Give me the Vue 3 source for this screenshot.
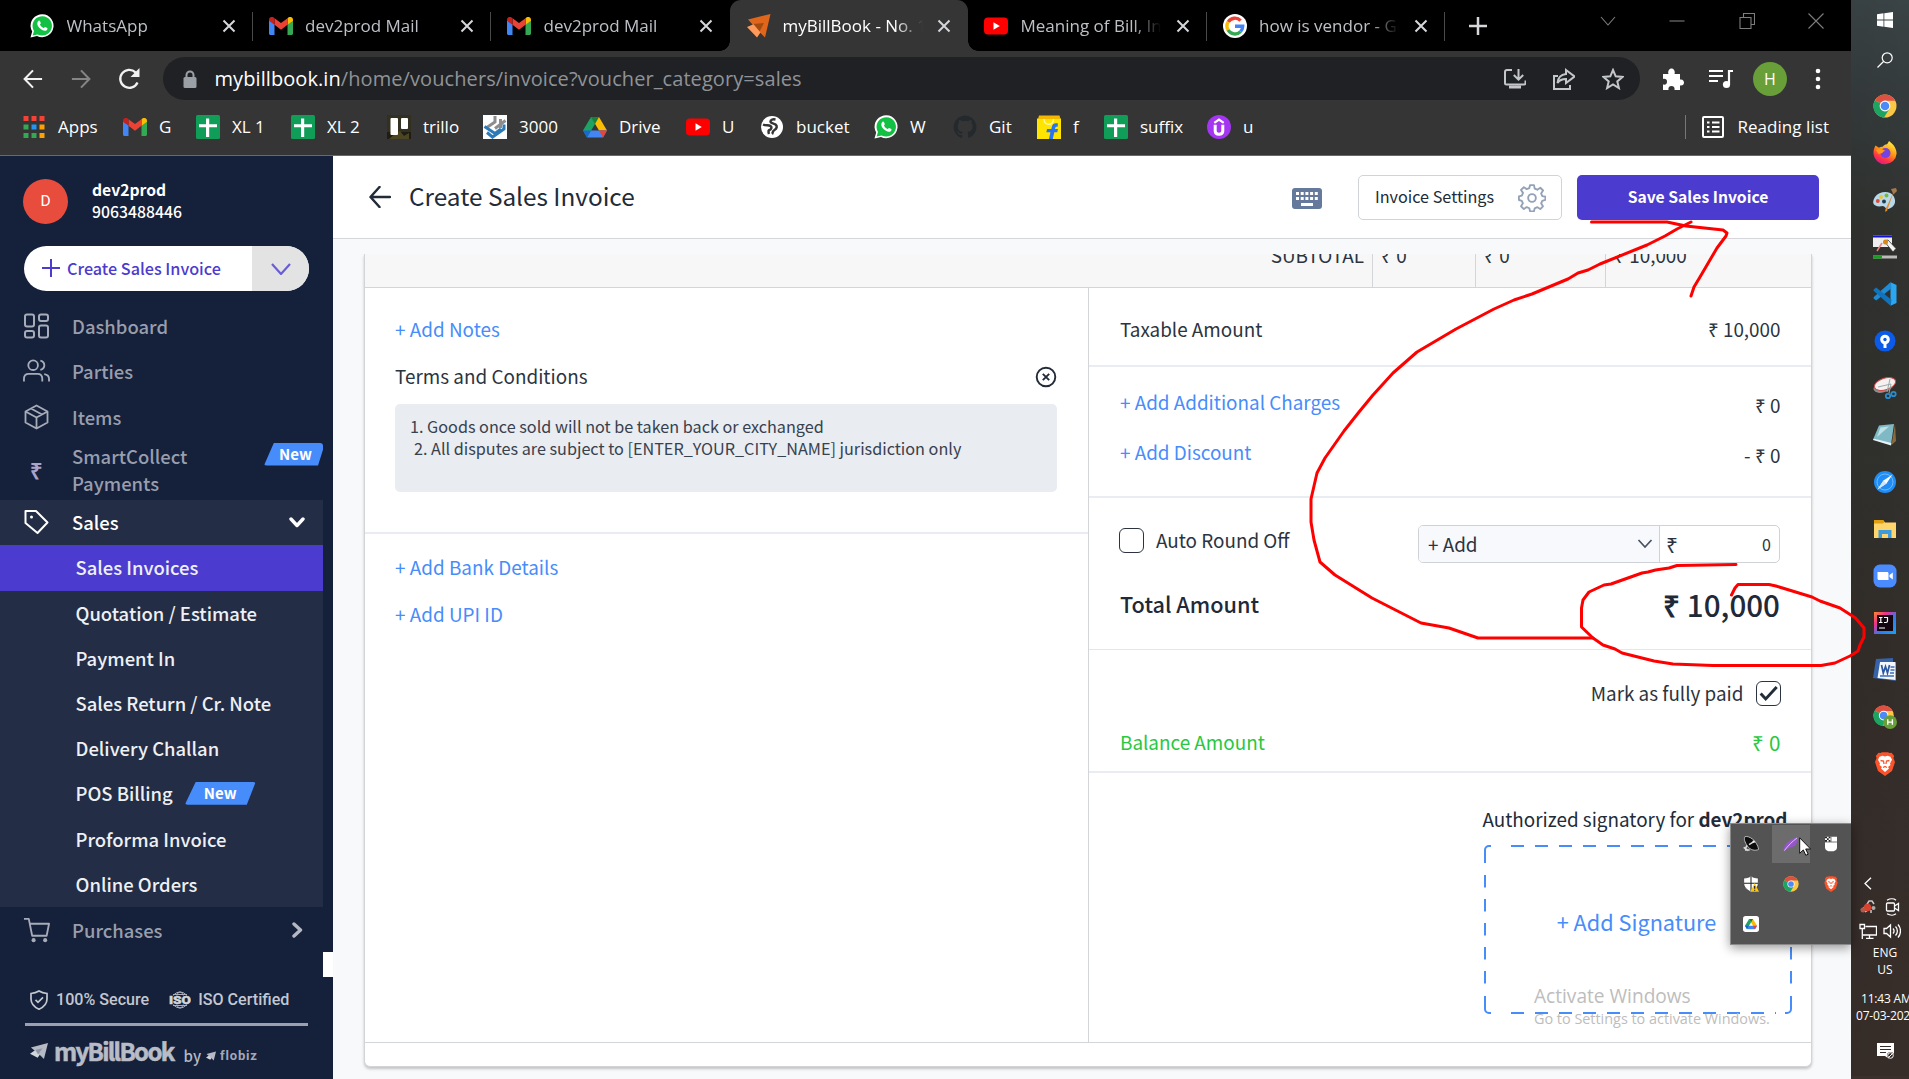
<script setup>
const tabs = [
  { icon: 'whatsapp', title: 'WhatsApp' },
  { icon: 'gmail', title: 'dev2prod Mail' },
  { icon: 'gmail', title: 'dev2prod Mail' },
  { icon: 'billbook', title: 'myBillBook - No. 1', active: true },
  { icon: 'youtube', title: 'Meaning of Bill, Inv' },
  { icon: 'google', title: 'how is vendor - Go' },
]
const bookmarks = [
  { icon: 'apps', label: 'Apps', w: 101 },
  { icon: 'gmail', label: 'G', w: 73 },
  { icon: 'sheet', label: 'XL 1', w: 95 },
  { icon: 'sheet', label: 'XL 2', w: 96 },
  { icon: 'trello', label: 'trillo', w: 96 },
  { icon: 'hub', label: '3000', w: 100 },
  { icon: 'drive', label: 'Drive', w: 103 },
  { icon: 'youtube', label: 'U', w: 74 },
  { icon: 'globe', label: 'bucket', w: 114 },
  { icon: 'whatsapp', label: 'W', w: 79 },
  { icon: 'github', label: 'Git', w: 84 },
  { icon: 'flipkart', label: 'f', w: 67 },
  { icon: 'sheet', label: 'suffix', w: 103 },
  { icon: 'udemy', label: 'u', w: 60 },
]
const nav = [
  { icon: 'dashboard', label: 'Dashboard' },
  { icon: 'parties', label: 'Parties' },
  { icon: 'items', label: 'Items' },
]
const subnav = [
  { label: 'Sales Invoices', active: true },
  { label: 'Quotation / Estimate' },
  { label: 'Payment In' },
  { label: 'Sales Return / Cr. Note' },
  { label: 'Delivery Challan' },
  { label: 'POS Billing', badge: true },
  { label: 'Proforma Invoice' },
  { label: 'Online Orders' },
]
const taskbar = ['chrome', 'firefox', 'paint', 'pointer', 'vscode', 'sourcetree', 'snip', 'notepad', 'safari', 'folder', 'zoom', 'intellij', 'word', 'chromeh', 'brave']
const tray = ['dish', 'feather', 'mouse', 'shield', 'chrome', 'brave', 'drivebox']
</script>

<template>
  <div class="screen">
    <svg class="defs" width="0" height="0" aria-hidden="true">
      <defs>
        <linearGradient id="ffg" x1="0.8" y1="0" x2="0.3" y2="1">
          <stop offset="0" stop-color="#fff44f" /><stop offset=".45" stop-color="#ff980e" /><stop offset=".75" stop-color="#ff3647" /><stop offset="1" stop-color="#e31587" />
        </linearGradient>
        <linearGradient id="ijg" x1="0" y1="0" x2="1" y2="1">
          <stop offset="0" stop-color="#fc8a2b" /><stop offset=".3" stop-color="#f2308b" /><stop offset=".6" stop-color="#2b7df0" /><stop offset="1" stop-color="#18a0f8" />
        </linearGradient>
        <symbol id="whatsapp" viewBox="0 0 24 24">
          <path d="M.5 23.5 2.2 17.6A11.5 11.5 0 1 1 7 22z" fill="#fff" />
          <path d="M2.6 21.4 4 17A9.7 9.7 0 1 1 7.6 20.4z" fill="#12c143" />
          <path d="M8.6 6.8c.5-.4 1-.3 1.3.3l.9 2c.1.5-.9 1.3-.8 1.7a8 8 0 0 0 3.5 3.3c.5.1 1.1-1.2 1.7-1.1l2.1 1c.5.3.1 1.800-.6 2.300-1.200.8-2.700.7-4.500-.2a12 12 0 0 1-4.300-4.200c-.9-1.800-.8-3.900.7-5.100z" fill="#fff" />
        </symbol>
        <symbol id="gmail" viewBox="0 0 24 18">
          <path d="M0 3v13.500c0 .8.700 1.500 1.600 1.500H5.500V7.200L0 3z" fill="#4285f4" />
          <path d="M24 3v13.500c0 .8-.7 1.500-1.600 1.500h-3.900V7.200z" fill="#34a853" />
          <path d="M18.500 7.800V1.200l1.200-.9C21.500-.9 24 .5 24 2.600v1.200z" fill="#fbbc04" />
          <path d="M5.500 7.800V1.200l6.500 4.900 6.500-4.900v6.600L12 12.700z" fill="#ea4335" />
          <path d="M0 2.600v1.200l5.500 4V1.200L4.300.3C2.500-.9 0 .5 0 2.600z" fill="#c5221f" />
        </symbol>
        <symbol id="billbook" viewBox="0 0 24 24">
          <path d="M1 5.500 23.500 0 18 23.500 10.500 16z" fill="#e0661c" /><path d="M6 10 17 9 12.500 17.500z" fill="#a34a10" />
          <path d="M0 13 6.500 10.200 13.500 18.500 10 23.500z" fill="#ff9a5c" />
        </symbol>
        <symbol id="youtube" viewBox="0 0 24 24"><rect x="0" y="3.500" width="24" height="17" rx="4" fill="#f00" /><path d="M9.500 8.300 15.800 12 9.500 15.700z" fill="#fff" /></symbol>
        <symbol id="google" viewBox="0 0 24 24">
          <circle cx="12" cy="12" r="12" fill="#fff" />
          <g fill="none" stroke-width="3.400"><path d="M5.200 8A7.800 7.800 0 0 1 17.600 6.600" stroke="#ea4335" /><path d="M5.200 16.200A7.800 7.800 0 0 1 5.200 7.900" stroke="#fbbc05" /><path d="M17.500 17.600A7.800 7.800 0 0 1 5.100 16" stroke="#34a853" /><path d="M12 12.200h7.700c0 2.500-.8 4-2.300 5.400" stroke="#4285f4" /></g>
        </symbol>
        <symbol id="apps" viewBox="0 0 24 24">
          <g fill="#f44336"><path d="M1.500 1h5v5h-5zM9.500 1h5v5h-5zM17.500 1h5v5h-5z" /></g><path d="M1.500 9.500h5v5h-5zM1.500 18h5v5h-5zM9.500 18h5v5h-5z" fill="#34a853" /><path d="M9.500 9.500h5v5h-5z" fill="#2196f3" /><path d="M17.500 9.500h5v5h-5zM17.500 18h5v5h-5z" fill="#ffa000" />
        </symbol>
        <symbol id="sheet" viewBox="0 0 24 24"><rect width="24" height="24" rx="1.500" fill="#0f9d58" /><path d="M10 3.500h3.200v5.800H21v2.900h-7.800V22H10v-9.800H3V9.300h7z" fill="#fff" /></symbol>
        <symbol id="trello" viewBox="0 0 24 24"><path d="M0 0h24v24H0z" fill="#33301f" /><path d="M0 17h24v7H0z" fill="#1f1d13" /><path d="M13 16l4 5 5-3v6H2l6-5z" fill="#6a6131" opacity=".6" /><rect x="3.500" y="3" width="7.500" height="17" rx="1" fill="#fff" /><rect x="14" y="3" width="7" height="11" rx="1" fill="#fff" /></symbol>
        <symbol id="hub" viewBox="0 0 24 24"><path d="M0 0h24v24H0z" fill="#fff" /><g fill="none" stroke-width="3"><path d="M12 1v6L3 13M22.500 5.500 12 13.500M17.500 4v9" stroke="#8d8d8d" /><path d="M1.500 11.500 12 18.500l6-4.500M4 17.500l5.500 4.500L21 14V9.500" stroke="#2c7bb8" /></g></symbol>
        <symbol id="drive" viewBox="0 0 24 22"><path d="M8 1h8l8 13.500h-8z" fill="#fbbc04" /><path d="M8 1 12 8 4 21.500 0 14.500z" fill="#1ea362" /><path d="M4 21.500 8 14.500h16L20 21.500z" fill="#4285f4" /><path d="M0 14.500h8L4 21.500z" fill="#1967d2" /><path d="M16 14.500h8L20 21.500z" fill="#ea4335" /><path d="M8 1h8l-4 7z" fill="#188038" /></symbol>
        <symbol id="globe" viewBox="0 0 24 24"><circle cx="12" cy="12" r="11" fill="#fff" /><path d="M3 9.500c3 1.500 5.500 0 7.500 1.500s.5 3.500-1 4-1 2.500-.5 4M15.500 4.500c-2.500-.5-5 0-5 2s3 1.500 5 3 1.500 4-1 5.500-1.500 3-2.500 4" fill="none" stroke="#353535" stroke-width="2.500" /></symbol>
        <symbol id="github" viewBox="0 0 24 24"><path d="M12 .5a11.500 11.500 0 0 0-3.600 22.400c.6.1.8-.3.8-.6v-2.200c-3.200.7-3.900-1.400-3.900-1.400-.5-1.300-1.300-1.700-1.300-1.700-1-.7.1-.7.1-.7 1.200.1 1.800 1.200 1.800 1.200 1 1.800 2.700 1.300 3.400 1 .1-.8.4-1.300.7-1.600-2.600-.3-5.200-1.300-5.200-5.700 0-1.300.4-2.300 1.200-3.100-.1-.3-.5-1.500.1-3.100 0 0 1-.3 3.200 1.200a11 11 0 0 1 5.800 0c2.200-1.500 3.200-1.200 3.200-1.200.6 1.600.2 2.800.1 3.100.7.800 1.200 1.800 1.200 3.100 0 4.400-2.700 5.400-5.300 5.700.4.400.8 1.100.8 2.100v3.200c0 .3.200.700.8.600A11.500 11.500 0 0 0 12 .5z" fill="#24292e" /></symbol>
        <symbol id="flipkart" viewBox="0 0 24 24"><path d="M0 3.500h24V24H0z" fill="#ffe500" /><path d="M2 .5h20.500l1 3.500H1z" fill="#f5b800" /><path d="M7 4c0 7 9.500 7 9.500 0" fill="none" stroke="#fff6a0" stroke-width="1.500" /><path d="M21 8.500c-4-.8-5.500.5-6.200 3.500l-.5 2H10l-.6 3.200h4L12 24h3.800l1.500-6.800h3l.7-3.200h-3l.3-1.300c.3-1 1-1.200 2.300-1z" fill="#2874f0" /></symbol>
        <symbol id="udemy" viewBox="0 0 24 24"><circle cx="12" cy="12" r="12" fill="#a435f0" /><path d="M7.300 7.800 12 4.500l4.700 3.300" fill="none" stroke="#fff" stroke-width="2.200" /><path d="M8.200 9.800V16c0 2 1.500 3.300 3.800 3.300s3.800-1.300 3.800-3.300V9.800" fill="none" stroke="#fff" stroke-width="3" /></symbol>

        <symbol id="dashboard" viewBox="0 0 26 26"><g fill="none" stroke="currentColor" stroke-width="2"><rect x="1.500" y="1.500" width="9" height="12" rx="2" /><rect x="15.500" y="1.500" width="9" height="6.500" rx="2" /><rect x="1.500" y="18" width="9" height="6.500" rx="2" /><rect x="15.500" y="12.500" width="9" height="12" rx="2" /></g></symbol>
        <symbol id="parties" viewBox="0 0 28 26"><g fill="none" stroke="currentColor" stroke-width="1.900"><circle cx="10.500" cy="7" r="5" /><path d="M1 24v-3c0-3 2-5 5-5h9c3 0 5 2 5 5v3M18 2.200c5.500 1.500 5.500 8 0 9.600M22 16.200c3.500.5 5 2.500 5 5V24" /></g></symbol>
        <symbol id="items" viewBox="0 0 26 26"><g fill="none" stroke="currentColor" stroke-width="1.800" stroke-linejoin="round"><path d="M13 1.500 24 7.500v11L13 24.500 2 18.500v-11zM2 7.500l11 6 11-6M13 13.500v11M7.500 4.500l11 6" /></g></symbol>
        <symbol id="tag" viewBox="0 0 26 26"><path d="M2 2h10.500L24 13.500 14 24 2 14z" fill="none" stroke="currentColor" stroke-width="2" stroke-linejoin="round" /><circle cx="8" cy="8" r="1.500" fill="currentColor" /></symbol>
        <symbol id="cart" viewBox="0 0 28 26"><g fill="none" stroke="currentColor" stroke-width="1.900" stroke-linejoin="round"><path d="M1 1.500h5L9.500 19h15L27 6.500H7" /></g><circle cx="11" cy="23.500" r="2.100" fill="currentColor" /><circle cx="23" cy="23.500" r="2.100" fill="currentColor" /></symbol>

        <symbol id="chrome" viewBox="0 0 24 24"><circle cx="12" cy="12" r="11.500" fill="#fbc745" /><path d="M12 12 2 6.200A11.500 11.500 0 0 1 22.200 6.700H12z" fill="#dd5144" /><path d="M12 12 1.900 6.300A11.500 11.500 0 0 0 11 23.500L16.600 14.600z" fill="#1da462" /><circle cx="12" cy="12" r="5.400" fill="#fff" /><circle cx="12" cy="12" r="4.300" fill="#4c8bf5" /></symbol>
        <symbol id="chromeh" viewBox="0 0 26 26"><use href="#chrome" x="0" y="0" width="23" height="23" /><circle cx="18.500" cy="18.500" r="7.500" fill="#689f38" /><path d="M16 15.500v6M21 15.500v6M16 18.500h5" stroke="#fff" stroke-width="1.500" /></symbol>
        <symbol id="firefox" viewBox="0 0 24 24"><path d="M2.500 4.500 6 6.800c1-.8 2-1 3.500-1 .8-1 2.200-2.300 4.500-2.500C15 2 15.500 1 16 0c4 3 7.600 7 7.600 12.500A11.600 11.600 0 0 1 .5 13C.4 9.500 1 7 2.500 4.500z" fill="url(#ffg)" /><circle cx="12.500" cy="12" r="5" fill="#7542e5" /><path d="M3 9c3-2 7-1 9.500 1-2 0-3 1-3 2l-4 1z" fill="#ff9a1f" /></symbol>
        <symbol id="paint" viewBox="0 0 24 24"><path d="M2 9C6 3 17 2 20.500 8s1 11-5 13c-3 .8-3-3-6-3-4 1-8.500 0-9.300-3C0 12.500 1 10.500 2 9z" fill="#b9d9ea" /><circle cx="8" cy="9" r="2" fill="#e8c83a" /><circle cx="13.500" cy="7.500" r="2" fill="#74b93c" /><circle cx="4.800" cy="13" r="1.900" fill="#d84a3a" /><circle cx="11" cy="13.500" r="2" fill="#1d3f56" /><path d="M21 3 14 23l-2 .8.500-2.500z" fill="#e08a2c" /><path d="m18 1 5-1 1 3-3.500 3.500z" fill="#a5794b" /></symbol>
        <symbol id="pointer" viewBox="0 0 24 24"><path d="M0 .5h19v11.500H0z" fill="#eee" /><path d="M0 .5h19v2H0z" fill="#1010d8" /><path d="m4 16 5-8" stroke="#f08080" stroke-width="1.500" /><path d="m11 6 4-1 8 8.500-3 3.500z" fill="#f4f4f4" stroke="#333" stroke-width=".8" /><circle cx="12.500" cy="7" r="2.500" fill="#d88a18" /><path d="M0 20.500h24v3H0z" fill="#bbb" /><path d="M0 20.500h9v3H0z" fill="#16a020" /></symbol>
        <symbol id="vscode" viewBox="0 0 24 24"><path d="M17.500.3 23.500 3v18l-6 2.700z" fill="#2aa7f0" /><path d="m17.500.3 1 6L3.200 18.500.6 16.500v-1.200z" fill="#1f8bd4" /><path d="m17.500 23.700 1-6L3.200 5.500.6 7.500v1.200z" fill="#0f74bd" /></symbol>
        <symbol id="sourcetree" viewBox="0 0 24 24"><circle cx="12" cy="12" r="10.500" fill="#0b5be8" /><circle cx="12" cy="10.500" r="4.800" fill="#fff" /><circle cx="12" cy="10.500" r="1.700" fill="#0b5be8" /><path d="M10.500 14h3v5h-3z" fill="#fff" /></symbol>
        <symbol id="snip" viewBox="0 0 24 24"><ellipse cx="11" cy="10" rx="11" ry="6" transform="rotate(-22 11 10)" fill="#8e8e8e" /><ellipse cx="12" cy="8" rx="11" ry="5.800" transform="rotate(-18 12 8)" fill="#f4f1f0" stroke="#d04848" stroke-width="1" /><path d="m5 11 13-3-2 9M17 3l-3 13" stroke="#9aa" fill="none" /><g fill="none" stroke="#2a8bd0" stroke-width="1.800"><circle cx="15" cy="20" r="2.200" /><circle cx="20.500" cy="18" r="2.200" /></g></symbol>
        <symbol id="notepad" viewBox="0 0 24 24"><path d="M22 1l1 17-4.500 4z" fill="#8a6a3a" /><path d="M6 2.500 21 1l-3 21L.5 15.500z" fill="#7fb9c6" /><path d="M.5 15.500 18.300 20 18 22.500 0 17z" fill="#e6f2f4" /><path d="M7.500 4.500 16 3.500 4 14z" fill="#bfe0e5" /></symbol>
        <symbol id="safari" viewBox="0 0 24 24"><circle cx="12" cy="12" r="11" fill="#1f8df5" /><circle cx="12" cy="12" r="8" fill="none" stroke="#6fb8fa" stroke-width="1" /><path d="M19.500 4.500 13.500 13.500 4.500 19.500 10.500 10.500z" fill="#fff" /><path d="M10.500 10.500 13.500 13.500 4.500 19.500z" fill="#cfe6fb" /></symbol>
        <symbol id="folder" viewBox="0 0 24 24"><path d="M1 3h9l2 2.500h11V21H1z" fill="#ffd66b" /><path d="M1 3h9l1.500 2L10 6.500H1z" fill="#e0a012" /><path d="M5.500 13h13v8H15v-4H9v4H5.500z" fill="#3f9bdc" /></symbol>
        <symbol id="zoom" viewBox="0 0 24 24"><rect x=".5" y=".5" width="23" height="23" rx="6.500" fill="#4a8cff" /><path d="M4.500 8h9.500c1 0 1.500.6 1.500 1.500V16H6c-1 0-1.500-.6-1.500-1.500zM16.500 11l3.300-2.500v7L16.500 13z" fill="#fff" /></symbol>
        <symbol id="intellij" viewBox="0 0 24 24"><path d="M1 1h22v22H1z" fill="url(#ijg)" /><path d="M4 4h16v16H4z" fill="#120510" /><path d="M6 6.500h3.500M7.800 6.500v5M6 11.500h3.500M11 6.500h3.500v3.500c0 1-.6 1.500-1.500 1.500h-2M6 17h6" stroke="#fff" stroke-width="1.200" fill="none" /></symbol>
        <symbol id="word" viewBox="0 0 24 24"><path d="M3 1 20 0v4l3 1.500V23L0 20z" fill="#3562a8" /><path d="M7 4h15.500v18L4.500 20z" fill="#f3f6fc" /><path d="m8.500 7 1.800 8 2.200-6.500L14.500 15l2-8" fill="none" stroke="#2b57a0" stroke-width="1.700" /><path d="M17.500 9h4M17.500 12h4M7 18h14M17 15h4" stroke="#3d6cb8" stroke-width="1.400" /></symbol>
        <symbol id="brave" viewBox="0 0 24 24"><path d="m7.500 1 1.500-.8h6l1.500.8 2-.2 2.700 3.300-.8 2L22 10l-3 9-7 5-7-5-3-9 1.600-3.900-.8-2L5.500.8z" fill="#fb542b" /><path d="m12 4.500 2.500-.8 3 1 1.500 3-2 3.800.5 1.500-2.500 2 1 1.500-4 3.500-4-3.500 1-1.500-2.500-2 .5-1.500-2-3.800 1.500-3 3-1z" fill="#fff" /><path d="M7.500 8.500 10.500 9l.5 3M16.500 8.500 13.500 9l-.5 3M10 15.500l2-1 2 1" stroke="#fb542b" stroke-width="1.300" fill="none" /></symbol>
        <symbol id="dish" viewBox="0 0 24 24"><path d="M3 1C9-1 21 7 23.500 20c-5 3-13 1-17-5S1 4 3 1z" fill="#0c0c0c" stroke="#ccc" stroke-width="1.300" /><path d="m9 13 8-5M1 17l7 5M3 21h7M6 14l-3 6" stroke="#ddd" stroke-width="2.300" /><circle cx="16" cy="8.500" r="1.800" fill="#eee" /></symbol>
        <symbol id="feather" viewBox="0 0 24 24"><path d="M1 23C0 14 8 5 23 1c-1 7-2 12-8 15-4 2-9 2-11 5z" fill="#9456c8" /><path d="M2 22C8 14 13 9 21 3" stroke="#dcc3f0" stroke-width="1.500" fill="none" /></symbol>
        <symbol id="mouse" viewBox="0 0 24 24"><path d="M3 1h18v15c0 5-3 7-9 7s-9-2-9-7z" fill="#fff" /><path d="M3 9h18M12 1v8" stroke="#555" stroke-width="1.200" /><path d="M3 1h3v2.500H3zM8.500 1H11v2.500H8.500zM6 3.500h2.500V6H6zM3 6h3v2.500H3zM8.500 6H11v2.500H8.500z" fill="#222" /></symbol>
        <symbol id="shield" viewBox="0 0 24 24"><path d="M12 0c3 2 7 3 11 3v7c0 7-5 11-11 14C6 21 1 17 1 10V3c4 0 8-1 11-3z" fill="#fff" stroke="#222" stroke-width="1" /><path d="M12 1v22M1.500 11h21" stroke="#222" stroke-width="1.600" /><path d="m17.500 10.500 6.500 13H11z" fill="#fdc60b" /><path d="M17.500 15v4M17.500 20.500v1.500" stroke="#222" stroke-width="1.800" /></symbol>
        <symbol id="drivebox" viewBox="0 0 24 24"><rect width="24" height="24" rx="4" fill="#fff" /><use href="#drive" x="3" y="3.500" width="18" height="17" /></symbol>
      </defs>
    </svg>

    <div class="browser">
      <div class="tabbar">
        <div v-for="(t, i) in tabs" :key="i" class="tab" :class="{ active: t.active, nosep: i === 2 || t.active }">
          <svg class="fav" :class="{ mail: t.icon === 'gmail' }"><use :href="'#' + t.icon" /></svg>
          <span class="tab-title">{{ t.title }}</span>
          <svg class="x" viewBox="0 0 14 14"><path d="M1.500 1.500l11 11M12.500 1.500l-11 11" /></svg>
        </div>
        <svg class="plus" viewBox="0 0 18 18"><path d="M9 0v18M0 9h18" /></svg>
        <div class="winctl">
          <svg viewBox="0 0 16 16"><path d="M1 4l7 8 7-8" /></svg>
          <svg viewBox="0 0 16 16"><path d="M.5 8h15" /></svg>
          <svg viewBox="0 0 16 16"><path d="M1 4.500h11v11H1zM4.500 4.500v-4h11v11H12" /></svg>
          <svg viewBox="0 0 16 16"><path d="M.5.500l15 15M15.500.500l-15 15" /></svg>
        </div>
      </div>

      <div class="toolbar">
        <svg class="nav-ic" viewBox="0 0 22 22"><path d="M21 11H2M11 1.500 1.800 11 11 20.500" /></svg>
        <svg class="nav-ic dim" viewBox="0 0 22 22"><path d="M1 11h19M11 1.500 20.200 11 11 20.500" /></svg>
        <svg class="nav-ic reload" viewBox="0 0 22 22"><path d="M19 14.500A9 9 0 1 1 17 4.300l2 2" /><path d="M21 0v9h-9z" class="fill" /></svg>
        <div class="omnibox">
          <svg class="lock" viewBox="0 0 14 18"><path d="M3.500 8V5a3.500 3.500 0 0 1 7 0v3" fill="none" stroke="#9aa0a6" stroke-width="2" /><rect x=".5" y="7" width="13" height="11" rx="1.500" fill="#9aa0a6" /></svg>
          <span class="url"><b>mybillbook.in</b>/home/vouchers/invoice?voucher_category=sales</span>
          <svg class="oi" viewBox="0 0 22 22"><path d="M8 2H3a2 2 0 0 0-2 2v11a1.500 1.500 0 0 0 1.500 1.500H20a1.500 1.500 0 0 0 1.500-1.500v-2.500M14.500 1v10M9.800 7l4.700 4.700L19.200 7" /><path d="M5 17.500h12v3H5z" class="fill" /></svg>
          <svg class="oi" viewBox="0 0 22 22"><path d="M5 8H1v13h16v-4" /><path d="M13 2l8.500 6.500L13 15v-4c-4 0-6.500 1-8.500 4C5 9.500 8 6.500 13 6z" /></svg>
          <svg class="oi" viewBox="0 0 22 22"><path d="m11 2 2.700 6.300 6.800.6-5.200 4.500 1.600 6.700-5.900-3.600-5.900 3.600 1.600-6.700L1.500 8.900l6.800-.6z" /></svg>
        </div>
        <svg class="ti" viewBox="0 0 22 22"><path d="M1 6h5.500c-1-3 .8-5.500 3-5.500s4 2.500 3 5.500H18v5.500c2.500-.5 4 1 4 3s-1.500 3.500-4 3V22h-5.500c.5-2.500-.8-4-3-4s-3.500 1.500-3 4H1v-5.500c2.500.5 4-.5 4-2.800S3.500 10.500 1 11z" fill="#fff" /></svg>
        <svg class="ti music" viewBox="0 0 24 20"><path d="M0 2h14M0 7h14M0 12h9M24 2h-4v13" fill="none" stroke="#fff" stroke-width="2.200" /><circle cx="17.500" cy="15.500" r="3.600" fill="#fff" /></svg>
        <span class="avatar">H</span>
        <svg class="dots" viewBox="0 0 6 22"><circle cx="3" cy="3" r="2.300" /><circle cx="3" cy="11" r="2.300" /><circle cx="3" cy="19" r="2.300" /></svg>
      </div>

      <div class="bookmarks">
        <div v-for="(b, i) in bookmarks" :key="i" class="bm" :style="{ width: b.w + 'px' }">
          <svg :class="{ mail: b.icon === 'gmail' }"><use :href="'#' + b.icon" /></svg><span>{{ b.label }}</span>
        </div>
        <div class="reading">
          <svg viewBox="0 0 22 22"><rect x="1" y="1" width="20" height="20" rx="1" fill="none" stroke="#fff" stroke-width="2" /><path d="M5 6.500h2.500M5 11h2.500M5 15.500h2.500M10 6.500h7.500M10 11h7.500M10 15.500h7.500" stroke="#fff" stroke-width="2" /></svg>
          <span>Reading list</span>
        </div>
      </div>

      <div class="page">
        <aside class="sidebar">
          <div class="profile">
            <span class="pic">D</span>
            <div><div class="pname">dev2prod</div><div class="pnum">9063488446</div></div>
          </div>
          <div class="create">
            <div class="create-main"><svg viewBox="0 0 18 18"><path d="M9 0v18M0 9h18" /></svg>Create Sales Invoice</div>
            <div class="create-more"><svg viewBox="0 0 20 12"><path d="M1 1l9 10 9-10" /></svg></div>
          </div>
          <nav>
            <div v-for="n in nav" :key="n.label" class="row"><svg class="ni"><use :href="'#' + n.icon" /></svg>{{ n.label }}</div>
            <div class="row smart"><span class="rupee">₹</span><span>SmartCollect<br>Payments</span><span class="new cut">New</span></div>
            <div class="row sales"><svg class="ni"><use href="#tag" /></svg>Sales<svg class="chev" viewBox="0 0 16 11"><path d="M2 2l6 6.500L14 2" /></svg></div>
            <div class="sub">
              <div v-for="s in subnav" :key="s.label" class="subrow" :class="{ on: s.active }">{{ s.label }}<span v-if="s.badge" class="new">New</span></div>
            </div>
            <div class="row"><svg class="ni"><use href="#cart" /></svg>Purchases<svg class="chev closed" viewBox="0 0 11 16"><path d="M2 2l6.500 6L2 14" /></svg></div>
          </nav>
          <div class="trust">
            <svg class="sh" viewBox="0 0 18 20"><path d="M9 1c2.500 1.500 5 2.200 8 2.500V9c0 5-3 8-8 10.200C4 17 1 14 1 9V3.500C4 3.200 6.500 2.500 9 1zM5.500 9.800l2.500 2.500 5-5" /></svg>
            <span>100% Secure</span>
            <svg class="iso" viewBox="0 0 22 18"><g fill="none" stroke="#a9aebb" stroke-width="1"><circle cx="11" cy="9" r="8" /><ellipse cx="11" cy="9" rx="4" ry="8" /><path d="M4 3.500h14M4 14.500h14" /></g><rect y="4.500" width="22" height="9" fill="#15203a" /><text x="0" y="12.800" textLength="22" lengthAdjust="spacingAndGlyphs">ISO</text></svg>
            <span>ISO Certified</span>
          </div>
          <div class="brand">
            <svg class="plane" viewBox="0 0 20 18"><path d="M1 5 20 0l-4.500 18-5-5z" fill="#b5bac5" /><path d="M0 12 6 8l5 5-2.500 3.500z" fill="#d2d5dc" /><path d="M6 8 14 6l-5 7z" fill="#8e95a5" /></svg>
            <span class="mbb">myBillBook</span><span class="by">by</span>
            <svg class="plane sm" viewBox="0 0 20 18"><path d="M1 5 20 0l-4.500 18-5-5z" fill="#b5bac5" /><path d="M0 12 6 8l5 5-2.500 3.500z" fill="#d2d5dc" /></svg>
            <span class="flo">flobiz</span>
          </div>
          <div class="corner"></div>
        </aside>

        <main>
          <header>
            <svg class="back" viewBox="0 0 22 22"><path d="M21 11H2M10.500 1 1.500 11l9 10" /></svg>
            <h1>Create Sales Invoice</h1>
            <svg class="kbd" viewBox="0 0 30 21"><rect width="30" height="21" rx="3" fill="#64799b" /><path d="M4 5.500h22M4 10.500h22" stroke="#fff" stroke-width="3" stroke-dasharray="3 1.700" /><path d="M9 16.500h12" stroke="#fff" stroke-width="3" /></svg>
            <div class="settings">Invoice Settings
              <svg viewBox="0 0 24 24"><circle cx="12" cy="12" r="3.300" /><path d="M10.300 1h3.400l.6 2.900 2.300 1 2.500-1.700 2.400 2.400-1.700 2.500 1 2.300 2.700.5v2.700l-2.700.8-1 2.200 1.600 2.500-2.300 2.400-2.500-1.600-2.300 1-.7 2.600h-3.200l-.7-2.700-2.200-1-2.500 1.700-2.400-2.400 1.600-2.500-.9-2.200L.8 13.700v-3.100l2.500-.6 1-2.400-1.700-2.500L5 2.800l2.500 1.600 2.200-.9z" /></svg>
            </div>
            <button class="save">Save Sales Invoice</button>
          </header>

          <section class="card">
            <div class="subtotal"><span class="lab"><i>SUBTOTAL</i></span><span class="c1"><i>₹ 0</i></span><span class="c2"><i>₹ 0</i></span><span class="c3"><i>₹ 10,000</i></span></div>
            <div class="cols">
              <div class="left">
                <div class="notes">
                  <a>+ Add Notes</a>
                  <div class="terms-h">Terms and Conditions<svg viewBox="0 0 22 22"><circle cx="11" cy="11" r="9.300" /><path d="M7.800 7.800l6.400 6.400M14.200 7.800l-6.400 6.400" /></svg></div>
                  <div class="terms"><div>1. Goods once sold will not be taken back or exchanged</div><div class="t2">2. All disputes are subject to [ENTER_YOUR_CITY_NAME] jurisdiction only</div></div>
                </div>
                <div class="bank"><a>+ Add Bank Details</a><a>+ Add UPI ID</a></div>
              </div>
              <div class="right">
                <div class="taxable line"><span>Taxable Amount</span><span>₹ 10,000</span></div>
                <div class="charges">
                  <div class="line"><a>+ Add Additional Charges</a><span class="low">₹ 0</span></div>
                  <div class="line"><a>+ Add Discount</a><span class="low">- ₹ 0</span></div>
                </div>
                <div class="totals">
                  <div class="line round"><span class="chk"></span><span class="auto">Auto Round Off</span>
                    <div class="combo"><div class="sel">+ Add<svg viewBox="0 0 16 10"><path d="M1.500 1l6.500 7 6.500-7" /></svg></div><div class="amt"><span class="cur">₹</span><span class="z">0</span></div></div>
                  </div>
                  <div class="line total"><span>Total Amount</span><span class="big"><b>₹</b> 10,000</span></div>
                </div>
                <div class="balance">
                  <div class="line paid"><span>Mark as fully paid</span><span class="chk"><svg viewBox="0 0 24 24"><path d="M4 12.500l5.500 6L21.500 5.500" /></svg></span></div>
                  <div class="line green"><span>Balance Amount</span><span class="due">₹ 0</span></div>
                </div>
                <div class="sign">
                  <div class="auth">Authorized signatory for <b>dev2prod</b></div>
                  <div class="box">
                    <svg class="dash" viewBox="0 0 308 169">
                      <path d="M1 18V5a4 4 0 0 1 4-4h2M301 1h2a4 4 0 0 1 4 4v13M307 151v13a4 4 0 0 1-4 4h-2M7 168H5a4 4 0 0 1-4-4v-13" />
                      <path d="M27 1H292M27 168H292" stroke-dasharray="13 11" />
                      <path d="M1 30V148M307 30V148" stroke-dasharray="12.500 11.500" />
                    </svg>+ Add Signature
                  </div>
                </div>
              </div>
            </div>
            <div class="foot"></div>
          </section>
        </main>
      </div>
    </div>

    <div class="taskbar">
      <svg class="win" viewBox="0 0 16 16"><path d="M0 2.300 6.500 1.300v6.300H0zM7.300 1.200 16 0v7.600H7.300zM0 8.400h6.500v6.300L0 13.700zM7.300 8.400H16V16l-8.700-1.200z" fill="#fff" /></svg>
      <svg class="mag" viewBox="0 0 16 16"><circle cx="10.200" cy="5.800" r="5" /><path d="M6.500 9.500.500 15.500" /></svg>
      <div class="apps"><svg v-for="t in taskbar" :key="t"><use :href="'#' + t" /></svg></div>
      <svg class="up" viewBox="0 0 8 13"><path d="M7 .700 1 6.500l6 5.800" /></svg>
      <div class="sys">
        <svg viewBox="0 0 18 18"><path d="M2 12l5-4 3-5h3l2 3M6 14l3-2M12 12v3" stroke="#c9c9c9" stroke-width="1.500" fill="none" /><circle cx="8.500" cy="9.500" r="3.800" fill="#d8432f" /><circle cx="4" cy="12" r="2.500" fill="#b55a48" /><circle cx="14.500" cy="10" r="2" fill="#aaa" /></svg>
        <svg viewBox="0 0 18 18"><g fill="none" stroke="#fff" stroke-width="1.300"><rect x="3.500" y="5" width="8" height="8" rx="1" /><path d="M11.500 8l4-2.500v7l-4-2.500M4 2.200c3-1.700 7-1.700 9 0M4 15.800c3 1.700 7 1.700 9 0" /></g></svg>
        <svg viewBox="0 0 18 18"><g fill="none" stroke="#fff" stroke-width="1.300"><path d="M6.500 4.500h11v8.500H4M10.500 13v3M7 16.300h7.500M1 2.500h4.500v4H1zM3.300 6.500V17" /></g></svg>
        <svg viewBox="0 0 18 18"><g fill="none" stroke="#fff" stroke-width="1.300"><path d="M1 6.500h2.500L7.500 3v12l-4-3.500H1zM10 6.500c1.300 1.500 1.300 3.500 0 5M12.500 4.500c2.500 2.500 2.500 6.500 0 9M15 2.500c3.300 3.500 3.300 9.500 0 13" /></g></svg>
      </div>
      <div class="lang">ENG<br>US</div>
      <div class="clock"><span>11:43 AM</span><span>07-03-2022</span></div>
      <svg class="note" viewBox="0 0 17 17"><path d="M0 0h17v13h-5v3l-4-3H0z" fill="#fff" /><path d="M3 3.500h11M3 6.500h11M3 9.500h6" stroke="#362c28" stroke-width="1.200" /><circle cx="13.500" cy="12.500" r="3.500" fill="#362c28" /><circle cx="13.500" cy="12.500" r="2.800" fill="none" stroke="#fff" stroke-width="1" /><path d="M11.500 14.500l4-4" stroke="#fff" /></svg>
    </div>

    <div class="watermark"><div class="w1">Activate Windows</div><div class="w2">Go to Settings to activate Windows.</div></div>

    <svg class="ink" viewBox="0 0 1909 1079">
      <path d="M1593 638H1478L1449 628 1421 623 1372 598 1335 575 1320 562 1314 540 1311 522V499L1317 473 1325 458 1344 431 1359 412 1373 395 1393 373 1417 352 1456 329 1494 309 1514 300 1532 294 1568 279 1578 273 1588 270 1600 264 1647 245 1665 236 1677 229 1691 222" />
      <path d="M1591.500 222H1667L1686 226 1723 230 1727 233 1726 236 1717 248 1700 277 1694 287 1691 296" />
      <path d="M1736 564.500 1677 565.500 1669 568 1655.500 570 1648 572 1642 573 1611 584 1604 585 1589 592 1583 600 1581.500 608V627L1593 638 1603 645 1615 649 1622 653 1654 661 1673 664 1713 665.500H1821L1835 663 1850 656 1858 651 1860 645 1864 637V628L1855.500 618 1840 608 1820 601 1812 597 1776 586 1769 584.500H1738L1735 588 1731.500 595" />
    </svg>

    <div class="tray">
      <span v-for="t in tray" :key="t" class="cell" :class="{ hover: t === 'feather' }"><svg><use :href="'#' + t" /></svg></span>
      <svg class="cursor" viewBox="0 0 12 19"><path d="M.7.800v15.500l3.600-3.400 2.500 5.400 2.400-1.100-2.500-5.200h4.900z" fill="#fff" stroke="#111" stroke-width="1" /></svg>
    </div>
  </div>
</template>

<style>
body { margin: 0; overflow: hidden; background: #f8f9fb; }
</style>
<style scoped>
* { box-sizing: border-box; }
.screen { position: relative; display: flex; width: 1909px; height: 1079px; overflow: hidden; font-family: "Noto Sans CJK SC", sans-serif; color: #2b3440; white-space: nowrap; }
.defs { position: absolute; }
svg { flex: none; display: block; }
i { font-style: normal; }
.browser { width: 1851px; display: flex; flex-direction: column; flex: none; font-family: "Open Sans", "Noto Sans", sans-serif; }

.tabbar { height: 51px; background: #000; display: flex; align-items: center; padding-left: 14px; position: relative; }
.tab { width: 238.500px; height: 51px; display: flex; align-items: center; padding: 0 17px 0 16px; position: relative; color: #bdc1c6; font-size: 17px; }
.tab::after { content: ""; position: absolute; right: 0; top: 12px; width: 1px; height: 29px; background: #4a4a4a; }
.tab.nosep::after { display: none; }
.tab.active { background: #353535; border-radius: 11px 11px 0 0; color: #fff; padding-left: 17px; }
.tab.active::before { content: ""; position: absolute; left: -10px; right: -10px; bottom: 0; height: 10px; background: radial-gradient(circle at 0 0, transparent 9.500px, #353535 10px) 0 0 / 10px 10px no-repeat, radial-gradient(circle at 100% 0, transparent 9.500px, #353535 10px) 100% 0 / 10px 10px no-repeat; }
.fav { width: 24px; height: 24px; }
.fav.mail { height: 18px; }
.tab-title { flex: 1; margin: 0 8px 0 12.500px; overflow: hidden; line-height: 26px; -webkit-mask-image: linear-gradient(90deg, #000 112px, transparent 140px); mask-image: linear-gradient(90deg, #000 112px, transparent 140px); }
.active .tab-title { margin-left: 12px; }
.x { width: 14px; height: 14px; stroke: #d5d7da; stroke-width: 2; fill: none; }
.plus { width: 18px; height: 18px; margin-left: 24px; stroke: #d5d7da; stroke-width: 2.500; }
.winctl { margin-left: auto; display: flex; gap: 53.500px; padding-right: 27px; margin-top: -9px; }
.winctl svg { width: 16px; height: 16px; fill: none; stroke: #7d7d7d; stroke-width: 1.100; }

.toolbar { height: 55px; background: #353535; display: flex; align-items: center; padding-left: 22px; }
.nav-ic { width: 22px; height: 20px; margin-right: 26px; fill: none; stroke: #f1f1f1; stroke-width: 2.300; }
.nav-ic.dim { stroke: #858585; }
.nav-ic.reload { margin-right: 22px; width: 23px; height: 22px; }
.nav-ic .fill { fill: #f1f1f1; stroke: none; }
.omnibox { width: 1477px; height: 43px; border-radius: 22px; background: #202124; display: flex; align-items: center; padding: 0 16px 0 20px; }
.lock { width: 14px; height: 18px; margin-right: 17.500px; }
.url { flex: 1; font-size: 20px; color: #8f9398; line-height: 30px; font-family: "Open Sans", "Noto Sans", sans-serif; letter-spacing: .08px; }
.url b { font-weight: 400; color: #fff; }
.oi { width: 22px; height: 22px; margin-left: 27px; fill: none; stroke: #c4c7ca; stroke-width: 2; }
.oi .fill { fill: #c4c7ca; stroke: none; }
.ti { width: 22px; height: 22px; margin-left: 22px; }
.ti.music { width: 24px; height: 20px; margin-left: 25px; }
.avatar { width: 34px; height: 34px; margin-left: 20px; border-radius: 50%; background: #689f38; color: #fff; font-size: 16px; display: flex; align-items: center; justify-content: center; }
.dots { width: 6px; height: 22px; fill: #fff; margin-left: 28px; }

.bookmarks { height: 50px; background: #353535; border-bottom: 1px solid #6b676b; display: flex; align-items: center; padding: 0 22px 8px 22px; color: #fff; font-size: 17px; }
.bm { display: flex; align-items: center; gap: 12px; flex: none; }
.bm svg { width: 24px; height: 24px; }
.bm svg.mail { height: 18px; }
.bm span, .reading span { margin-top: -1px; }
.reading { margin-left: auto; display: flex; align-items: center; gap: 13px; padding-left: 16px; height: 24px; border-left: 1px solid #777; letter-spacing: .05px; }
.reading svg { width: 22px; height: 22px; }

.page { flex: 1; display: flex; min-height: 0; font-family: "Noto Sans CJK SC", sans-serif; }
.sidebar { position: relative; width: 333px; background: #15203a; color: #fff; display: flex; flex-direction: column; flex: none; }
.profile { display: flex; align-items: center; height: 90px; padding-left: 23px; gap: 24px; flex: none; }
.pic { width: 45px; height: 45px; border-radius: 50%; background: #e84c3d; font: 400 15.500px/45px Roboto, sans-serif; text-align: center; }
.pname { font-size: 15.700px; font-weight: 700; line-height: 22px; }
.pnum { font-size: 15.800px; font-weight: 500; line-height: 22px; }
.create { display: flex; margin-left: 24px; width: 285px; height: 45px; border-radius: 23px; overflow: hidden; background: #fff; color: #4c3bcf; font-size: 16.200px; font-weight: 500; flex: none; }
.create-main { width: 228px; display: flex; align-items: center; gap: 7px; padding: 0 0 1px 18px; }
.create-main svg { width: 18px; height: 18px; stroke: #4c3bcf; stroke-width: 2; }
.create-more { flex: 1; background: #e3e3e3; display: flex; align-items: center; justify-content: center; }
.create-more svg { width: 20px; height: 12px; fill: none; stroke: #6a5ed6; stroke-width: 2.200; }
nav { margin-top: 12px; width: 323px; flex: none; }
.row { height: 45.500px; display: flex; align-items: center; padding-left: 23px; font-size: 18.450px; font-weight: 500; color: #989ead; }
.ni { width: 27px; height: 26px; margin-right: 22px; color: #a7acb9; }
.row.smart { height: 60px; line-height: 27px; padding-top: 0; }
.rupee { width: 27px; margin-right: 22px; text-align: center; font: 700 22px/27px "Noto Sans CJK SC", sans-serif; color: #a9a4cc; }
.new { width: 71px; height: 23px; margin-left: 12px; background: #478cfb; clip-path: polygon(11px 0, 100% 0, 62px 100%, 0 100%); border-radius: 3px; color: #fff; font-size: 15px; font-weight: 700; line-height: 22px; text-align: center; }
.new.cut { width: 59px; margin-left: auto; align-self: flex-start; margin-top: 3px; clip-path: polygon(10px 0, 100% 0, 100% 30%, 54px 100%, 0 100%); padding-left: 4px; }
.row.sales { background: #232d45; color: #fff; height: 45px; }
.row.sales .ni { color: #fff; }
.chev { width: 16px; height: 11px; margin-left: auto; margin-right: 18px; fill: none; stroke: #fff; stroke-width: 3.400; stroke-linecap: round; stroke-linejoin: round; }
.chev.closed { width: 11px; height: 16px; margin-right: 20px; stroke: #b4b8c4; }
.sub { background: #232d45; }
.subrow { height: 45.200px; display: flex; align-items: center; padding: 0 0 1px 75.500px; font-size: 18.450px; font-weight: 500; color: #eef0f4; }
.subrow.on { background: #4c3bcf; height: 46px; }
.trust { margin-top: 31px; height: 34px; flex: none; display: flex; align-items: center; padding-left: 29px; margin-bottom: 1px; font: 500 16.100px/20px Roboto, sans-serif; color: #c3c7d0; }
.trust .sh { width: 20px; height: 20px; fill: none; stroke: #c3c7d0; stroke-width: 1.700; margin-right: 7px; }
.trust .iso { width: 22px; height: 18px; margin: 0 7px 0 20px; }
.iso text { font: 900 10.500px Roboto, sans-serif; fill: #d3d6dd; stroke: #d3d6dd; stroke-width: .4px; }
.brand { margin: 5px 25px 0; border-top: 3px solid #9ba1b0; display: flex; align-items: center; height: 53px; flex: none; padding-left: 5px; color: #b5bac5; }
.plane { width: 18px; height: 18px; }
.mbb { font: 700 24px/30px "Noto Sans CJK SC", sans-serif; letter-spacing: -1.700px; margin-left: 6px; color: #b8bcc6; -webkit-text-stroke: .6px #b8bcc6; }
.by { font-size: 15px; line-height: 20px; margin: 10px 5px 0 10px; font-weight: 500; }
.plane.sm { width: 10px; height: 10px; margin-top: 9px; }
.flo { font: 700 13px/20px Roboto, sans-serif; letter-spacing: .8px; margin: 10px 0 0 4px; color: #a3a8b8; }
.corner { position: absolute; right: 0; top: 796px; width: 10px; height: 25px; background: #fff; }

main { flex: 1; background: #f8f9fb; display: flex; flex-direction: column; padding-bottom: 12px; }
header { height: 83px; background: #fff; border-bottom: 1px solid #d4d6da; display: flex; align-items: center; padding: 0 32px 0 36px; flex: none; }
.back { width: 22px; height: 22px; fill: none; stroke: #222b38; stroke-width: 2.500; stroke-linecap: round; stroke-linejoin: round; margin-top: -1px; }
h1 { margin: -3px auto 0 18px; font-size: 24.350px; font-weight: 400; line-height: 34px; color: #222b38; }
.kbd { width: 30px; height: 21px; margin: 3px 36px 0 0; }
.settings { width: 204px; height: 45px; border: 1px solid #d0d3d8; border-radius: 5px; display: flex; align-items: center; justify-content: space-between; padding: 0 15px 2px 16px; font-size: 16.200px; color: #222b38; }
.settings svg { width: 28px; height: 28px; fill: none; stroke: #94a2b8; stroke-width: 1.600; stroke-linejoin: round; margin-top: 4px; }
.save { width: 242px; height: 45px; margin-left: 15px; background: #4c3bcf; border: 0; border-radius: 5px; color: #fff; font: 700 15.700px/24px "Noto Sans CJK SC", sans-serif; padding: 0 0 1px; }

.card { margin: 15px 39px 0 31px; flex: 1; display: flex; flex-direction: column; background: #fff; border: 1px solid #d2d4d7; border-top: 0; border-radius: 0 0 6px 6px; box-shadow: 0 2px 3px rgba(0, 0, 0, .22); clip-path: inset(0 -6px -8px -6px); font-size: 18.880px; line-height: 28px; }
.subtotal { height: 34px; flex: none; background: #f7f7f7; border-bottom: 1px solid #d3d5d8; display: flex; justify-content: flex-end; overflow: hidden; }
.subtotal span { border-left: 1px solid #d3d5d8; padding-left: 8px; height: 33px; }
.subtotal i { display: block; margin-top: -13px; }
.subtotal .lab { border: 0; padding: 0 8px 0 0; font-size: 18.900px; }
.c1 { width: 103px; } .c2 { width: 130px; } .c3 { width: 206px; }
.cols { flex: 1; display: flex; }
.left { width: 724px; border-right: 1px solid #d3d5d8; }
a { color: #478cfb; }
.notes { height: 246px; border-bottom: 2px solid #e9ecf1; padding: 27px 31px 0 30px; letter-spacing: .02px; }
.notes a { display: block; }
.terms-h { display: flex; justify-content: space-between; align-items: center; margin-top: 19px; }
.terms-h svg { width: 22px; height: 22px; fill: none; stroke: #222b38; stroke-width: 1.900; margin-top: 1px; }
.terms { margin-top: 14px; height: 88px; border-radius: 5px; background: #e9ecf1; padding: 11px 15px; font-size: 16.200px; letter-spacing: 0; line-height: 22px; color: #38414e; }
.t2 { padding-left: 4px; }
.bank { padding: 19px 30px; display: flex; flex-direction: column; gap: 19px; letter-spacing: .03px; }
.right { flex: 1; display: flex; flex-direction: column; }
.line { display: flex; align-items: center; justify-content: space-between; }
.taxable { height: 79px; border-bottom: 2px solid #e9ecf1; padding: 4px 30.500px 0 31px; }
.charges { height: 131px; border-bottom: 2px solid #e9ecf1; padding: 21px 30.500px 0 31px; }
.charges .line { height: 28px; margin-bottom: 22px; }
.low { padding-top: 6px; }
.totals { height: 152px; border-bottom: 1px solid #e3e6ea; padding: 27px 31px 0 30px; }
.chk { width: 25px; height: 25px; border: 1.500px solid #2b3440; border-radius: 6px; flex: none; }
.round { height: 38px; }
.auto { margin: -8px auto 0 12px; }
.round .chk { margin-top: -7px; }
.combo { width: 362px; height: 38px; border: 1px solid #cfd2d7; border-radius: 5px; display: flex; overflow: hidden; }
.sel { width: 241px; background: #f8f9fc; border-right: 1px solid #cfd2d7; display: flex; align-items: center; justify-content: space-between; padding: 0 6px 0 9px; }
.sel svg { width: 16px; height: 10px; fill: none; stroke: #4a5260; stroke-width: 1.700; }
.amt { flex: 1; display: flex; align-items: center; justify-content: space-between; padding: 0 8px 0 6px; }
.cur { font-size: 21px; }
.z { font-size: 16px; }
.total { height: 62px; margin-top: 12px; font-size: 21.700px; font-weight: 500; color: #1f2937; padding-left: 1px; }
.total span { margin-top: -4px; }
.total .big { font-size: 29.600px; margin-top: -3px; }
.balance { height: 123px; border-bottom: 2px solid #e9ecf1; padding: 30px 30.500px 0 31px; }
.paid { justify-content: flex-end; gap: 12px; }
.paid > span:first-child { margin-top: -1px; }
.paid .chk svg { width: 22px; height: 22px; fill: none; stroke: #222b38; stroke-width: 3.200; }
.green { margin-top: 21px; color: #28c840; }
.due { font-size: 20.600px; }
.sign { padding: 32px 19.500px 0 0; display: flex; flex-direction: column; align-items: flex-end; }
.auth { padding-right: 4px; color: #222b38; }
.box { position: relative; width: 308px; height: 169px; margin-top: 12px; display: flex; align-items: center; justify-content: center; padding: 0 2px 15px 0; color: #478cfb; font-size: 21.700px; }
.dash { position: absolute; inset: 0; width: 308px; height: 169px; fill: none; stroke: #478cfb; stroke-width: 2; }
.foot { height: 24px; border-top: 1px solid #d3d5d8; flex: none; }

.taskbar { width: 58px; background: linear-gradient(90deg, rgba(0, 0, 0, .04), transparent), linear-gradient(#3a4345 0, #343a3b 10%, #30322f 20%, #30312d 40%, #332d29 60%, #382e29 100%); color: #fff; display: flex; flex-direction: column; align-items: center; padding-left: 10px; overflow: hidden; font: 14px/21px "Open Sans", "Noto Sans", sans-serif; border-bottom: 3px solid #3b302c; }
.win { width: 16px; height: 16px; margin-top: 12px; flex: none; }
.mag { width: 16px; height: 16px; margin-top: 24px; fill: none; stroke: #fff; stroke-width: 1.200; }
.apps { margin-top: 26px; display: flex; flex-direction: column; gap: 23px; }
.apps svg { width: 24px; height: 24px; }
.up { width: 8px; height: 13px; margin: 101px 0 0 -34px; fill: none; stroke: #fff; stroke-width: 1.300; }
.sys { display: grid; grid-template-columns: 18px 18px; gap: 6px; margin-top: 8px; margin-left: -10px; }
.sys svg { width: 18px; height: 18px; }
.lang { margin-top: 4px; line-height: 17px; font-size: 12px; text-align: center; }
.clock { align-self: flex-start; margin: 12px 0 0 -5px; display: flex; flex-direction: column; line-height: 17px; font-size: 12px; letter-spacing: -.2px; }
.clock span:first-child { padding-left: 5px; }
.note { width: 17px; height: 17px; margin-top: 19px; }

.watermark { position: absolute; left: 1534px; top: 982px; font-family: "Open Sans", "Noto Sans", sans-serif; color: #bdbdbd; }
.w1 { font-size: 19.100px; line-height: 28px; }
.w2 { font-size: 14.400px; line-height: 18px; }
.ink { position: absolute; left: 0; top: 0; width: 1909px; height: 1079px; fill: none; stroke: #f00; stroke-width: 3; stroke-linecap: round; stroke-linejoin: round; }
.tray { position: absolute; left: 1730px; top: 823px; width: 121px; height: 122px; background: #535353; border: 1px solid #8a8a8a; border-right: 0; box-shadow: 0 3px 10px rgba(0, 0, 0, .4); display: grid; grid-template-columns: repeat(3, 40px); grid-auto-rows: 40px; }
.cell { display: flex; align-items: center; justify-content: center; }
.cell.hover { background: #6c6c6c; width: 38px; height: 38px; margin-left: 1px; margin-top: 1px; }
.cell svg { width: 16px; height: 16px; }
.cursor { position: absolute; left: 68px; top: 13px; width: 12px; height: 19px; }
</style>
